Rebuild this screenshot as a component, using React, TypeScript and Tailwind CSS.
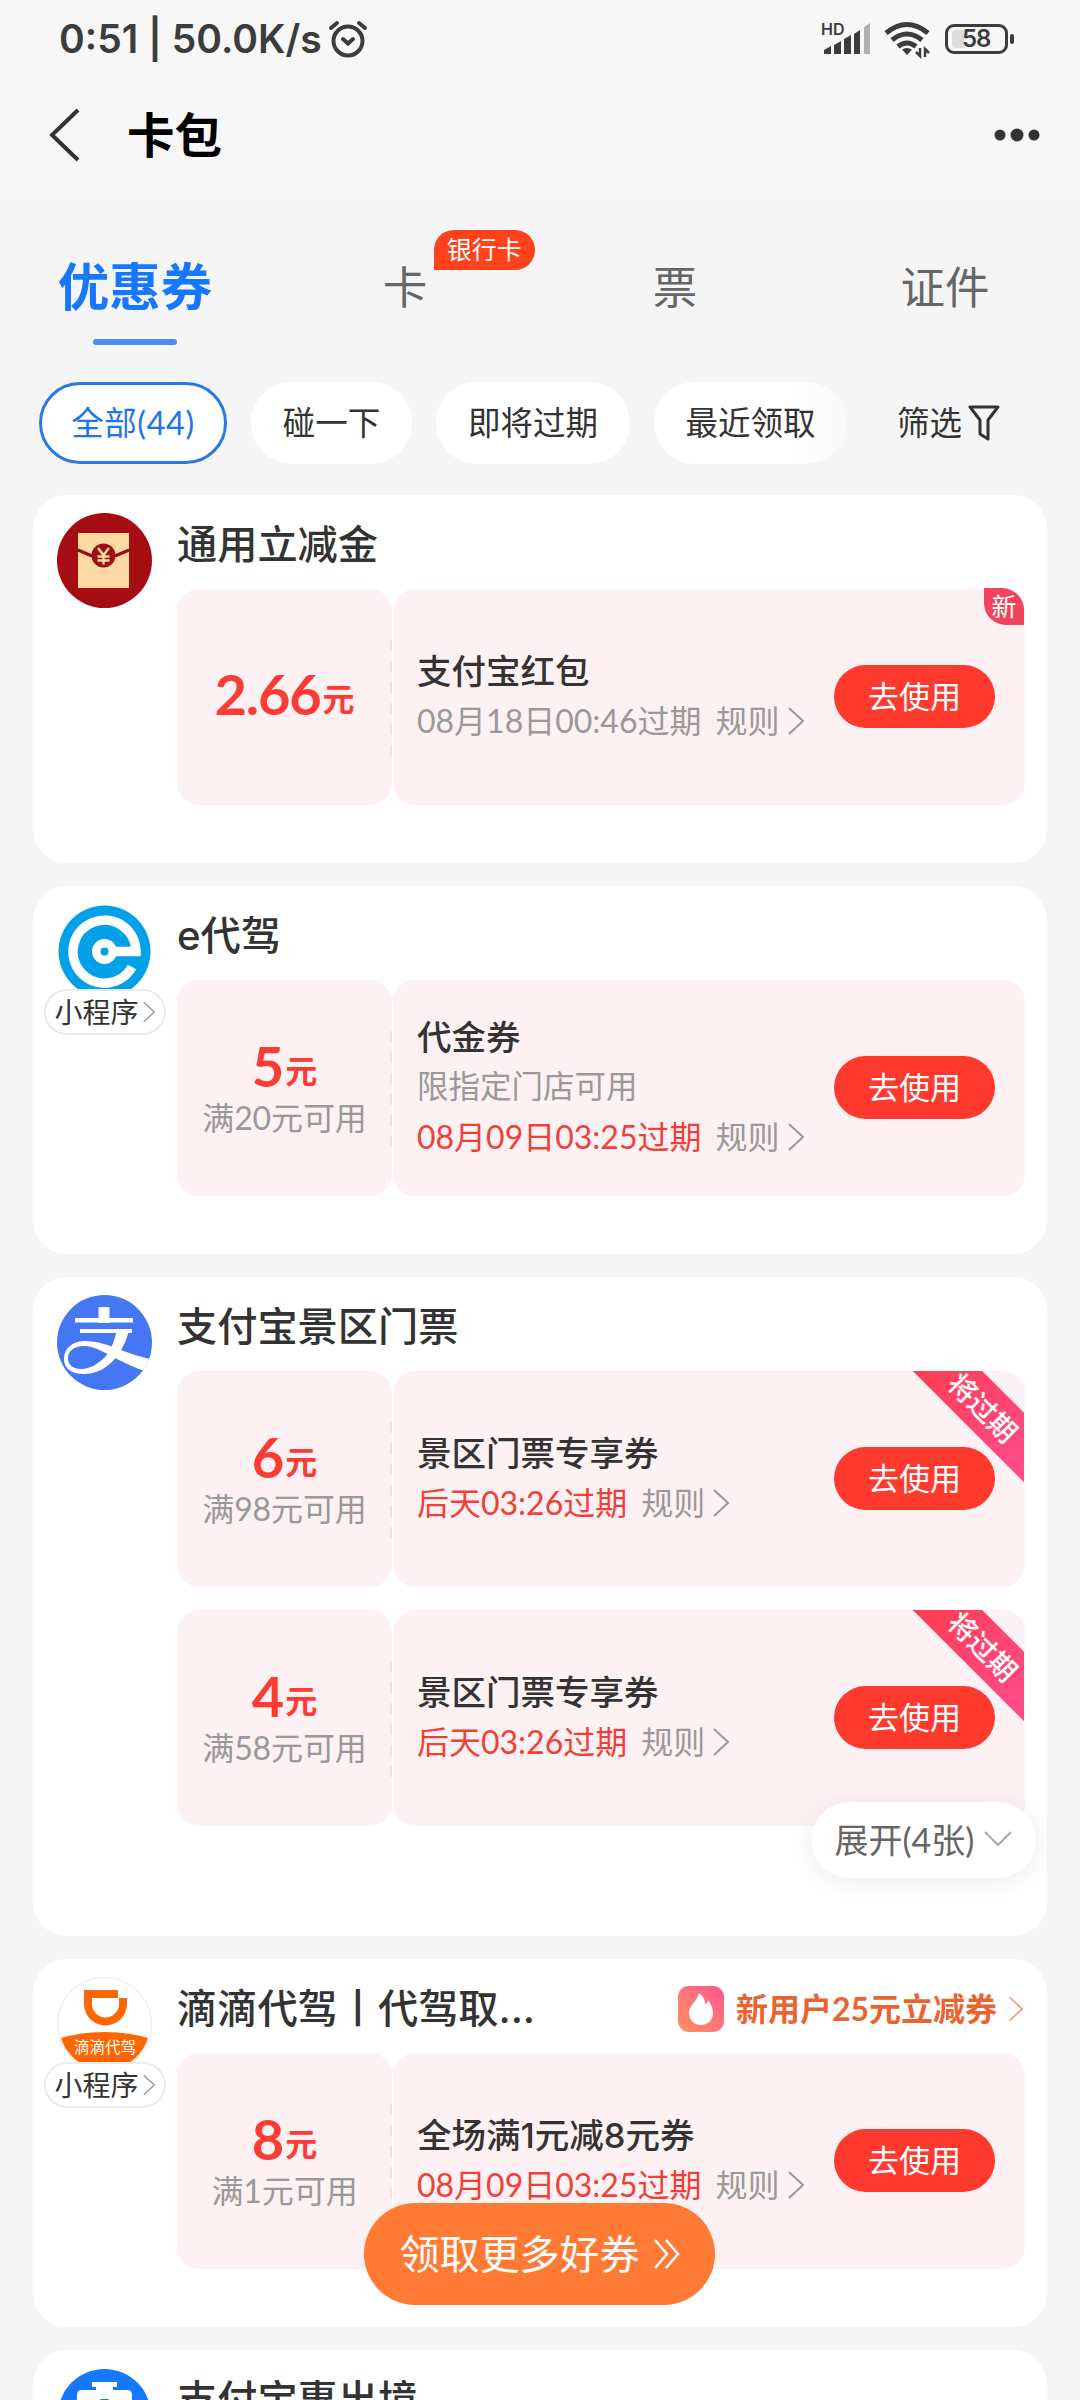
import type { ReactNode } from 'react'
import { clsx } from 'clsx'

type Coupon = {
  amount: string
  condition?: string
  title: string
  note?: string
  expiry: string
  urgent?: boolean
  tag?: 'new' | 'expiring'
}

type Shop = {
  name: string
  logo: ReactNode
  miniProgram?: boolean
  promo?: string
  more?: string
  coupons: Coupon[]
}

function Chevron({ className }: { className?: string }) {
  return (
    <svg viewBox="0 0 16 28" fill="none" stroke="currentColor" strokeWidth="2" className={className}>
      <path d="M1 1l14 13L1 27" />
    </svg>
  )
}

function RedPacketLogo() {
  return (
    <svg viewBox="0 0 95 95" className="size-[95px]">
      <circle cx="47.5" cy="47.5" r="47.5" fill="#a50d13" />
      <rect x="21" y="20" width="51" height="55" fill="#fdd9a5" />
      <path d="M21 37l14 6M72 37l-14 6" stroke="#8f1014" strokeWidth="3" />
      <circle cx="46.5" cy="42.5" r="12" fill="#9c1015" />
      <path d="M41 35l5.5 7 5.5-7M46.5 42v9.5M40.5 43.5h12M40.5 47.5h12" fill="none" stroke="#fdd9a5" strokeWidth="2.4" />
    </svg>
  )
}

function EDriveLogo() {
  return (
    <svg viewBox="0 0 95 95" className="size-[95px]">
      <circle cx="47.5" cy="47.5" r="46" fill="#02a0e9" />
      <path d="M47.5 47.5H79A31.5 31.5 0 1 0 75 63" fill="none" stroke="#fff" strokeWidth="9.5" />
      <circle cx="47.5" cy="47.5" r="12.5" fill="#fff" />
      <circle cx="47.5" cy="47.5" r="4" fill="#02a0e9" />
    </svg>
  )
}

function AlipayLogo() {
  return (
    <svg viewBox="0 0 95 95" className="size-[95px]">
      <defs>
        <clipPath id="alipay-disc"><circle cx="47.5" cy="47.5" r="47.5" /></clipPath>
      </defs>
      <g clipPath="url(#alipay-disc)">
        <rect width="95" height="95" fill="#4577f4" />
        <path d="M41.5 12h11v16h-11z" fill="#fff" />
        <path d="M18 23h58v4.5H18zM23 34h52v4H23z" fill="#fff" />
        <path d="M61 35h11c-2 9-6 18-12 26C52 72 40 79 27 79 14 79 7 73 7 64c0-11 9-18 21-18 12 0 24 4 36 9 10 4 20 7 29 9l-5 12c-10-3-20-8-30-13-10-5-20-12-31-12-10 0-16 5-16 12s5 11 13 11c9 0 17-5 24-12 6-7 10-17 12-28z" fill="#fff" />
      </g>
    </svg>
  )
}

function DidiLogo() {
  return (
    <svg viewBox="0 0 95 95" className="size-[95px]">
      <defs>
        <clipPath id="didi-disc"><circle cx="47.5" cy="47.5" r="45.5" /></clipPath>
      </defs>
      <circle cx="47.5" cy="47.5" r="47" fill="#fff" stroke="#efefef" strokeWidth="1.5" />
      <path d="M27 13h34v8h9v6a21.5 21.5 0 0 1-43 0zM35 21v6a13.5 13.5 0 0 0 27 0v-6z" fillRule="evenodd" fill="#fd6605" />
      <g clipPath="url(#didi-disc)">
        <path d="M0 62q47.5-14 95 0v33H0z" fill="#fd6605" />
      </g>
      <text x="48" y="76" textAnchor="middle" fontSize="15.5" fill="#fff">滴滴代驾</text>
    </svg>
  )
}

function SuitcaseLogo() {
  return (
    <svg viewBox="0 0 95 95" className="size-[95px]">
      <circle cx="47.5" cy="47.5" r="46.5" fill="#1677ff" />
      <path d="M35 14h25v5h-4v3h14q5 0 5 5v40H20V27q0-5 5-5h14v-3h-4z" fill="#fff" />
      <path d="M30 34h10l4-3h7l4 3h10v5H30z" fill="#1677ff" />
    </svg>
  )
}

const shops: Shop[] = [
  {
    name: '通用立减金',
    logo: <RedPacketLogo />,
    coupons: [{ amount: '2.66', title: '支付宝红包', expiry: '08月18日00:46过期', tag: 'new' }],
  },
  {
    name: 'e代驾',
    logo: <EDriveLogo />,
    miniProgram: true,
    coupons: [{ amount: '5', condition: '满20元可用', title: '代金券', note: '限指定门店可用', expiry: '08月09日03:25过期', urgent: true }],
  },
  {
    name: '支付宝景区门票',
    logo: <AlipayLogo />,
    more: '展开(4张)',
    coupons: [
      { amount: '6', condition: '满98元可用', title: '景区门票专享券', expiry: '后天03:26过期', urgent: true, tag: 'expiring' },
      { amount: '4', condition: '满58元可用', title: '景区门票专享券', expiry: '后天03:26过期', urgent: true, tag: 'expiring' },
    ],
  },
  {
    name: '滴滴代驾丨代驾取...',
    logo: <DidiLogo />,
    miniProgram: true,
    promo: '新用户25元立减券',
    coupons: [{ amount: '8', condition: '满1元可用', title: '全场满1元减8元券', expiry: '08月09日03:25过期', urgent: true }],
  },
  { name: '支付宝惠出境', logo: <SuitcaseLogo />, coupons: [] },
]

function StatusBar() {
  return (
    <div className="flex h-[78px] items-center pr-[66px] pl-[59px] text-[#3c3c3c]">
      <span className="font-[Inter] text-[39px] font-semibold whitespace-pre">0:51 | 50.0K/s</span>
      <svg viewBox="0 0 40 40" fill="none" stroke="currentColor" strokeWidth="4" strokeLinecap="round" className="ml-1.5 size-10">
        <circle cx="20" cy="22" r="14.5" />
        <path d="M15 20l5 4.5 5-4.5M3 9l6-5M37 9l-6-5" />
      </svg>
      <div className="ml-auto flex items-center">
        <svg viewBox="0 0 50 40" fill="currentColor" className="h-10 w-[50px]">
          <text x="0" y="16" fontSize="16" fontWeight="600" fontFamily="Inter">HD</text>
          <path d="M3 31l7-4v8H3zM13 26l7-4v13h-7zM23 20l7-4v19h-7zM33 15l6-4v24h-6z" />
          <path d="M43 8l6-4v31h-6z" opacity=".38" />
        </svg>
        <svg viewBox="0 0 46 40" fill="none" stroke="currentColor" strokeWidth="5" className="ml-[13px] h-10 w-[46px]">
          <path d="M2 14q21-17 42 0M8 21q15-12 30 0M14 27.5q9-7 18 0" />
          <path d="M18 30.5q5-3 10 0L23 36z" fill="currentColor" stroke="none" />
          <path d="M36 29v8l-4-4M41 38v-8l4 4" strokeWidth="2.5" />
        </svg>
        <span className="ml-[15px] flex h-[30px] w-[63px] items-center rounded-[9px] border-3 border-current pl-1">
          <span className="h-[18px] w-3 rounded-l-sm bg-[#dcdcdc]" />
          <span className="-ml-0.5 font-[Inter] text-[24px] leading-none font-semibold tracking-[-1px]">58</span>
        </span>
        <span className="ml-0.5 h-2.5 w-1 rounded-full bg-current" />
      </div>
    </div>
  )
}

function Header() {
  return (
    <header className="flex h-[122px] items-center pr-10 pb-[9px] pl-12">
      <svg viewBox="0 0 32 54" fill="none" stroke="#333" strokeWidth="4" className="h-[54px] w-8">
        <path d="M30 2L4 27l26 25" />
      </svg>
      <h1 className="ml-[47px] text-[47.5px] leading-none font-bold text-black">卡包</h1>
      <svg viewBox="0 0 46 14" fill="#333" className="ml-auto h-3.5 w-[46px]">
        <circle cx="6" cy="7" r="5.5" />
        <circle cx="23" cy="7" r="6.5" />
        <circle cx="40" cy="7" r="5.5" />
      </svg>
    </header>
  )
}

function Tabs() {
  return (
    <nav className="grid h-[182px] grid-cols-4 text-center text-[44.5px] text-[#666]">
      <div className="flex flex-col items-center pt-[60px]">
        <span className="text-[51.5px] leading-[52px] font-bold text-[#1677ff]">优惠券</span>
        <span className="mt-[27px] h-1.5 w-[84px] rounded-full bg-[#468ff0]" />
      </div>
      <div className="pt-[61px] leading-[52px]">
        <span className="relative">
          卡
          <span className="absolute -top-[30px] left-[51px] h-10 w-[101px] rounded-full rounded-bl-none bg-[#ff411c] text-[25px] leading-[38px] text-white">银行卡</span>
        </span>
      </div>
      <div className="pt-[61px] leading-[52px]">票</div>
      <div className="pt-[61px] leading-[52px]">证件</div>
    </nav>
  )
}

function Filters() {
  const chip = 'flex h-[82px] items-center justify-center rounded-full bg-white'
  return (
    <div className="flex items-center gap-6 pl-[39px] text-[32.5px] text-[#333]">
      <div className={clsx(chip, 'w-[188px] border-3 border-[#2a78e4] tracking-[0.6px] text-[#1f74ea]')}>全部(44)</div>
      <div className={clsx(chip, 'w-[161px]')}>碰一下</div>
      <div className={clsx(chip, 'w-[194px]')}>即将过期</div>
      <div className={clsx(chip, 'w-[193px] bg-linear-to-r from-white from-70% to-[#f9f9f9]')}>最近领取</div>
      <div className="ml-[26px] flex items-center gap-1.5">
        筛选
        <svg viewBox="0 0 32 36" fill="none" stroke="currentColor" strokeWidth="3" strokeLinejoin="round" className="h-9 w-8">
          <path d="M2 2h28L20 15v19l-8-5V15z" />
        </svg>
      </div>
    </div>
  )
}

function ExpiringRibbon() {
  return (
    <div className="absolute top-0 right-px h-[111px] w-[111px] overflow-hidden">
      <div className="absolute top-[13px] -left-[18px] flex h-[49px] w-[180px] rotate-45 items-center justify-center bg-linear-to-r from-[#ff3b4a] to-[#ff4c90] pr-1 text-[28px] font-medium text-white">
        将过期
      </div>
    </div>
  )
}

function CouponRow({ coupon }: { coupon: Coupon }) {
  return (
    <div className="relative flex h-[216px] gap-px">
      <div className="flex w-[215px] flex-col items-center justify-center rounded-[22px] bg-[#fef1f3]">
        <div className={clsx('flex items-baseline gap-0.5 leading-[50px] font-bold text-[#fa3c35]', coupon.condition ? 'pt-1' : 'pt-0.5')}>
          <span className="text-[56px] tracking-[-1.2px]">{coupon.amount}</span>
          <span className="-translate-y-1 text-[32px]">元</span>
        </div>
        {coupon.condition && <div className="-mt-1 text-[32px] leading-[44px] tracking-[-0.1px] text-[#999]">{coupon.condition}</div>}
      </div>
      <div className="absolute top-[51px] left-[213px] h-[116px] w-0.5 bg-[repeating-linear-gradient(#fbdde0_0_11px,transparent_11px_21px)]" />
      <div className="flex flex-1 items-center rounded-[22px] bg-[#fef1f3] pr-[30px] pb-0.5 pl-6">
        <div className="flex-1 leading-[49.5px] text-[#999]">
          <div className="font-[Inter,'Noto_Sans_CJK_SC',sans-serif] text-[34.5px] font-medium text-[#333]">{coupon.title}</div>
          {coupon.note && <div className="text-[31.5px]">{coupon.note}</div>}
          <div className="flex items-center text-[32px] whitespace-nowrap">
            <span className={clsx(coupon.urgent && 'text-[#ef4038]')}>{coupon.expiry}</span>
            <span className="ml-3.5">规则</span>
            <Chevron className="ml-2 h-7 w-4" />
          </div>
        </div>
        <button className="h-[63px] w-[161px] rounded-full bg-[#fe3a2f] text-[31px] leading-[61px] text-white">去使用</button>
      </div>
      {coupon.tag === 'new' && (
        <span className="absolute -top-px right-px h-[37px] w-10 rounded-tr-[22px] rounded-bl-[22px] bg-[#f0455c] text-center text-[25px] leading-9 text-white">新</span>
      )}
      {coupon.tag === 'expiring' && <ExpiringRibbon />}
    </div>
  )
}

function ShopCard({ shop }: { shop: Shop }) {
  return (
    <section className={clsx('relative flex rounded-[34px] bg-white pt-[18px] pr-[22px]', shop.more ? 'pb-[110px]' : 'pb-[58px]')}>
      <div className="flex w-[143px] shrink-0 flex-col items-center">
        {shop.logo}
        {shop.miniProgram && (
          <span className="relative -mt-2.5 flex h-[46px] w-[122px] items-center justify-center gap-1 rounded-full border-2 border-[#ebebeb] bg-white text-[28px] text-[#333]">
            小程序
            <Chevron className="h-6 w-3 text-[#999]" />
          </span>
        )}
      </div>
      <div className="ml-px flex-1">
        <div className="flex h-[62px] items-center justify-between pt-0.5">
          <h2 className="font-[Inter,'Noto_Sans_CJK_SC',sans-serif] text-[40.2px] leading-none font-medium text-[#333]">{shop.name}</h2>
          {shop.promo && (
            <div className="flex items-center text-[32px] leading-none font-bold text-[#e9652f]">
              <span className="mr-3 flex size-[46px] items-center justify-center rounded-[11px] bg-linear-to-bl from-[#ff5590] to-[#ff8f5c]">
                <svg viewBox="0 0 24 32" fill="#fff" className="h-8 w-6">
                  <path d="M10 0c5 4 6 7 6 11 2-1 3-2 3-4 3 4 5 8 5 13 0 7-5 12-12 12S0 27 0 20C0 12 8 9 10 0z" />
                </svg>
              </span>
              {shop.promo}
              <Chevron className="mr-0.5 ml-3 h-[26px] w-3.5 text-[#f0a080]" />
            </div>
          )}
        </div>
        <div className="mt-3.5 flex flex-col gap-[23px]">
          {shop.coupons.map((c) => <CouponRow key={c.amount} coupon={c} />)}
        </div>
      </div>
      {shop.more && (
        <button className="absolute right-[11px] bottom-[58px] flex h-[76px] w-[225px] items-center justify-center gap-2.5 rounded-full bg-white pb-0.5 text-[34px] text-[#666] shadow-[0_4px_24px_rgba(0,0,0,0.08)]">
          {shop.more}
          <svg viewBox="0 0 28 16" fill="none" stroke="#aaa" strokeWidth="2" className="h-4 w-7">
            <path d="M1 1l13 13L27 1" />
          </svg>
        </button>
      )}
    </section>
  )
}

export default function App() {
  return (
    <div className="relative h-[2400px] w-[1080px] overflow-hidden bg-[#f5f5f5] font-[Lato,'Noto_Sans_CJK_SC',sans-serif]">
      <div className="bg-[#f7f7f7]">
        <StatusBar />
        <Header />
      </div>
      <Tabs />
      <Filters />
      <main className="mt-[31px] flex flex-col gap-[23px] px-[33px]">
        {shops.map((s) => <ShopCard key={s.name} shop={s} />)}
      </main>
      <button className="absolute top-[2203px] left-[364px] flex h-[102px] w-[351px] items-center justify-center gap-3.5 rounded-full bg-[#ff7b35] text-[40px] text-white">
        领取更多好券
        <svg viewBox="0 0 26 30" fill="none" stroke="currentColor" strokeWidth="2.5" className="h-[30px] w-[26px]">
          <path d="M1 1l12 14L1 29M12 1l12 14-12 14" />
        </svg>
      </button>
    </div>
  )
}
